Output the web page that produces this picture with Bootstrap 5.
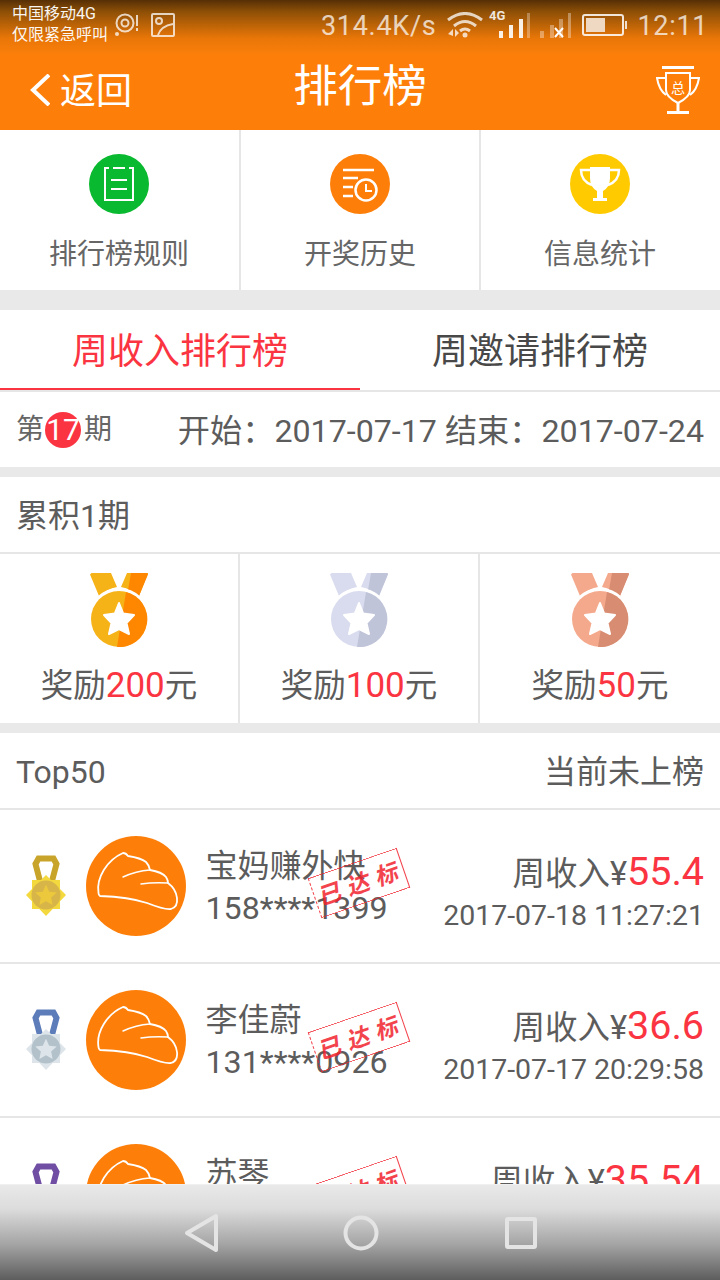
<!DOCTYPE html>
<html lang="zh-CN">

<head>
    <meta charset="UTF-8">
    <meta name="viewport" content="width=device-width, initial-scale=1.0">
    <title>排行榜</title>
    <link href="https://cdn.jsdelivr.net/npm/bootstrap@5.3.0/dist/css/bootstrap.min.css" rel="stylesheet">
    <style>
        body { margin: 0; background: #fff; font-family: Roboto, "Noto Sans CJK SC", sans-serif; color: #5c5c5c; }
        .phone { width: 720px; height: 1280px; overflow: hidden; position: relative; background: #fff; }

        .top-head { height: 130px; background: linear-gradient(#562f06 0, #8f5006 12px, #e87608 38px, #fd7f0a 56px); color: #fff; }
        .status-row { height: 50px; }
        .carrier { width: 103px; margin-left: 12px; margin-top: 3px; font-size: 16px; line-height: 21px; white-space: nowrap; opacity: .95; }
        .status-num { font-size: 27px; letter-spacing: .7px; opacity: .72; line-height: 52px; }
        .speed-num { margin-left: 146px; }
        .clock-num { margin-left: 9px; }
        .eye-ico { margin-top: 13px; }
        .pic-ico { margin: 13px 0 0 12px; }
        .wifi-ico { margin: 12px 0 0 11px; }
        .sig-ico { margin: 8px 0 0 6px; }
        .sig2-ico { margin: 12px 0 0 9px; }
        .batt-ico { margin: 13px 0 0 10px; }
        .title-row { height: 80px; padding: 0 20px 0 30px; }
        .back-link { width: 190px; font-size: 36px; gap: 10px; line-height: 1; }
        .back-link span { margin-top: 4px; }
        .page-title { font-size: 44.5px; line-height: 1; font-weight: 400; margin: 0 0 5px; }
        .side-box { width: 200px; }

        .gap-big { height: 20px; background: #e9e9e9; }
        .gap-small { height: 10px; background: #e9e9e9; }
        .line-b { border-bottom: 2px solid #e6e6e6; }
        .line-r { border-right: 2px solid #e6e6e6; }

        .entry-cell { height: 160px; padding-top: 24px; font-size: 28px; line-height: 1; color: #666; }
        .entry-a { width: 241px; padding-right: 1px; }
        .entry-b { width: 240px; }
        .entry-c { width: 239px; padding-right: 1px; }
        .round-ico { width: 60px; height: 60px; display: block; margin: 0 auto 27px; }

        .tab-bar { height: 82px; border-bottom: 2px solid #e6e6e6; font-size: 36px; }
        .tab-cell { width: 360px; height: 80px; line-height: 84px; text-align: center; color: #484848; }
        .tab-cell.active { color: #fb3441; border-bottom: 2px solid #fb3441; }

        .period-bar { height: 75px; padding: 0 16px; font-size: 32.2px; }
        .period-num { font-size: 28px; color: #666; }
        .period-num span { margin: 0 3px 0 1px; }
        .period-dot { width: 36px; height: 36px; border-radius: 50%; background: #fb3441; color: #fff; font-size: 30px; line-height: 36px; text-align: center; }
        .period-range { margin-top: 4px; }

        .info-bar { height: 77px; padding: 2px 16px 0; font-size: 32px; line-height: 1; }
        .prize-cell { height: 169px; padding-top: 19px; font-size: 32.5px; line-height: 1; color: #5c5c5c; }
        .prize-cell b { font-weight: 400; font-size: 35px; color: #fb3441; }
        .big-medal { width: 58px; height: 74px; display: block; margin: 0 auto 21px; }
        .m-gold { --m1: #f6b318; --m2: #ff8700; }
        .m-silver { --m1: #d9dcee; --m2: #c0c4d9; }
        .m-bronze { --m1: #f5a98c; --m2: #d88d72; }

        .rank-row { height: 154px; position: relative; border-bottom: 2px solid #e6e6e6; padding: 26px 16px 0 26px; }
        .rank-badge { width: 40px; height: 62px; margin: 19px 20px 0 0; flex-shrink: 0; }
        .rank-pic { width: 100px; height: 100px; flex-shrink: 0; margin-right: 19.5px; }
        .user-name { font-size: 32px; line-height: 41px; margin-top: 10px; }
        .user-phone { font-size: 32.2px; line-height: 42px; white-space: nowrap; }
        .sum-line { font-size: 32.5px; line-height: 43px; margin-top: 13.5px; white-space: nowrap; }
        .sum-line b { font-weight: 400; font-size: 39.5px; color: #fb3441; }
        .sum-time { font-size: 28.5px; line-height: 40px; white-space: nowrap; }
        .reach-stamp { position: absolute; left: 312px; top: 52px; width: 94px; height: 42px; border: 1.5px solid #f2242f; border-left-style: dashed; transform: rotate(-19deg); color: #f2242f; line-height: 38px; text-align: center; white-space: nowrap; opacity: .85; overflow: hidden; }
        .reach-stamp span { display: inline-block; font-family: "Noto Sans CJK SC", sans-serif; font-size: 23px; font-weight: 700; letter-spacing: 7px; margin-right: -7px; transform: skewX(-14deg); }

        .soft-keys { position: absolute; left: 0; right: 0; top: 1184px; height: 96px; background: linear-gradient(#e9e9e9 0, #dcdcdc 25%, #a5a5a5 62%, #5d5d5d 100%); border-top: 1px solid #f0f0f0; padding-bottom: 6px; }
        .key-back { left: 184px; top: 28px; }
        .key-home { left: 343px; top: 30px; }
        .key-task { left: 505px; top: 32px; }
    </style>
</head>

<body>
    <svg width="0" height="0" class="position-absolute">
        <defs>
            <symbol id="bigMedal" viewBox="0 0 58 74">
                <path d="M0 1.500 1.500 0H21L27 14Q17 16 9 23Z" fill="var(--m1)" />
                <path d="M37 0H58L49 23Q41 16 31 14Z" fill="var(--m1)" />
                <path d="M41 0H57.500L58 1.500 49 23Q44.500 19 38 17Z" fill="var(--m2)" />
                <circle cx="29" cy="46" r="31" fill="#fff" />
                <circle cx="29" cy="46" r="28" fill="var(--m1)" />
                <path d="M36 18.900A28 28 0 0 1 27 74Z" fill="var(--m2)" />
                <path d="M29 30 33.200 40.500 44 42 36.500 50 39 61 29 56 19 61 21.500 50 14 42 24.800 40.500Z" fill="#fff" stroke="#fff" stroke-width="2" stroke-linejoin="round" />
            </symbol>
            <symbol id="smallStar" viewBox="0 0 30 30">
                <path d="M15 4 18.400 11.400 26.500 12.300 20.500 17.800 22.100 25.800 15 21.800 7.900 25.800 9.500 17.800 3.500 12.300 11.600 11.400Z" />
            </symbol>
            <symbol id="avatarLogo" viewBox="0 0 100 100">
                <circle cx="50" cy="50" r="50" fill="#fd7f0a" />
                <path d="M12.500 57C10 42 21 24 37 17Q40 17 42 20 55 22 60 26 63 29 64 34 76 36 80 41 82 44 82 47 90 53 91 62 92 71 85 73 79 74 61 67 43 61 14 60 12.500 59 12.500 57Z" fill="none" stroke="#fff" stroke-width="1.800" stroke-linejoin="round" />
                <path d="M37 41Q50 35 64 34M55 48Q68 46 82 47" fill="none" stroke="#fff" stroke-width="1.500" stroke-linecap="round" />
            </symbol>
        </defs>
    </svg>

    <div class="phone">
        <div class="top-head">
            <div class="status-row d-flex">
                <div class="carrier">中国移动4G<br>仅限紧急呼叫</div>
                <svg width="24" height="24" viewBox="0 0 24 24" class="eye-ico opacity-75" fill="none" stroke="#fff">
                    <circle cx="10" cy="10" r="8.500" stroke-width="2" />
                    <circle cx="10" cy="10" r="3.500" stroke-width="2" />
                    <circle cx="2" cy="21" r="2" fill="#fff" stroke="none" />
                    <path d="M22 2v11M22 15v3" stroke-width="2" />
                </svg>
                <svg width="24" height="24" viewBox="0 0 24 24" class="pic-ico opacity-75" fill="none" stroke="#fff" stroke-width="2">
                    <rect x="1" y="1" width="22" height="22" rx="1" />
                    <circle cx="8" cy="8" r="3" />
                    <path d="M7 22Q10 13 22 11" />
                </svg>
                <div class="status-num speed-num">314.4K/s</div>
                <svg width="36" height="26" viewBox="0 0 36 26" class="wifi-ico opacity-75" fill="none" stroke="#fff" stroke-width="3">
                    <path d="M1 8Q18-5 35 8M7 14Q18 5 29 14M13 19Q18 15 23 19" />
                    <circle cx="18" cy="23" r="2.500" fill="#fff" stroke="none" />
                    <path d="M1 22 6 17V24ZM8 17 12 21 8 25Z" fill="#fff" stroke="none" />
                </svg>
                <svg width="42" height="30" viewBox="0 0 42 30" class="sig-ico" fill="#fff">
                    <text x="0" y="12" font-size="13" font-weight="700" font-family="Roboto, sans-serif" opacity=".85">4G</text>
                    <rect x="10" y="23" width="4" height="7" opacity=".9" />
                    <rect x="20" y="17" width="4" height="13" opacity=".9" />
                    <rect x="30" y="11" width="4" height="19" opacity=".9" />
                    <rect x="38" y="5" width="3" height="25" opacity=".3" />
                </svg>
                <svg width="32" height="26" viewBox="0 0 32 26" class="sig2-ico" fill="#fff">
                    <rect x="0" y="19" width="4" height="7" opacity=".35" />
                    <rect x="10" y="13" width="4" height="13" opacity=".35" />
                    <rect x="19" y="7" width="4" height="19" opacity=".35" />
                    <rect x="28" y="1" width="3" height="25" opacity=".35" />
                    <path d="M15 16 23 25M23 16 15 25" stroke="#fff" stroke-width="2" />
                </svg>
                <svg width="46" height="24" viewBox="0 0 46 24" class="batt-ico" fill="none" stroke="#fff" stroke-width="2">
                    <rect x="1" y="2" width="40" height="20" rx="2" opacity=".85" />
                    <rect x="4" y="5" width="19" height="14" fill="#f0d9c3" stroke="none" />
                    <rect x="43" y="8" width="2" height="8" fill="#fff" stroke="none" opacity=".8" />
                </svg>
                <div class="status-num clock-num">12:11</div>
            </div>
            <div class="title-row d-flex align-items-center justify-content-between">
                <div class="back-link d-flex align-items-center">
                    <svg width="20" height="32" viewBox="0 0 20 32" fill="none" stroke="#fff" stroke-width="4">
                        <path d="M19 1 3 16 19 31" />
                    </svg>
                    <span>返回</span>
                </div>
                <h1 class="page-title">排行榜</h1>
                <div class="side-box d-flex justify-content-end">
                    <svg width="44" height="48" viewBox="0 0 44 48" fill="none" stroke="#fff" stroke-width="2">
                        <path d="M6 1.500H38" stroke-width="3" />
                        <path d="M10 7H34V24Q34 31 22 37 10 31 10 24Z" />
                        <path d="M10 12H1Q3 24 10 29M34 12H43Q41 24 34 29" />
                        <path d="M22 37V45M11 46.500H33" stroke-width="3" />
                        <text x="22" y="27" font-size="14" fill="#fff" stroke="none" text-anchor="middle" font-family="Noto Sans CJK SC, sans-serif">总</text>
                    </svg>
                </div>
            </div>
        </div>

        <div class="d-flex">
            <div class="entry-a entry-cell line-r text-center">
                <svg class="round-ico" viewBox="0 0 60 60">
                    <circle cx="30" cy="30" r="30" fill="#09b92f" />
                    <path d="M20 14H16V46H44V14H40M24 14H36M22 26H38M22 35H38" fill="none" stroke="#fff" stroke-width="2" />
                </svg>
                排行榜规则
            </div>
            <div class="entry-b entry-cell line-r text-center">
                <svg class="round-ico" viewBox="0 0 60 60">
                    <circle cx="30" cy="30" r="30" fill="#fd7f0a" />
                    <path d="M13 16H44M13 24H28M13 33H23M13 42H23" fill="none" stroke="#fff" stroke-width="2.500" />
                    <circle cx="36" cy="36" r="10.500" fill="none" stroke="#fff" stroke-width="2.500" />
                    <path d="M36 30V37H42" fill="none" stroke="#fff" stroke-width="2" />
                </svg>
                开奖历史
            </div>
            <div class="entry-c entry-cell text-center">
                <svg class="round-ico" viewBox="0 0 60 60">
                    <circle cx="30" cy="30" r="30" fill="#ffcb00" />
                    <path d="M20 13H40V24Q40 33 33 37V44H37V47H23V44H27V37Q20 33 20 24Z" fill="#fff" />
                    <path d="M20 16H11Q11 27 22 31M40 16H49Q49 27 38 31" fill="none" stroke="#fff" stroke-width="2.500" />
                </svg>
                信息统计
            </div>
        </div>
        <div class="gap-big"></div>

        <div class="tab-bar d-flex">
            <div class="tab-cell active">周收入排行榜</div>
            <div class="tab-cell">周邀请排行榜</div>
        </div>

        <div class="period-bar d-flex align-items-center justify-content-between">
            <div class="period-num d-flex align-items-center">第<span class="period-dot">17</span>期</div>
            <div class="period-range">开始：2017-07-17 结束：2017-07-24</div>
        </div>
        <div class="gap-small"></div>

        <div class="info-bar line-b d-flex align-items-center">累积1期</div>
        <div class="row g-0">
            <div class="col-4 prize-cell line-r text-center m-gold">
                <svg class="big-medal"><use href="#bigMedal" /></svg>
                奖励<b>200</b>元
            </div>
            <div class="col-4 prize-cell line-r text-center m-silver">
                <svg class="big-medal"><use href="#bigMedal" /></svg>
                奖励<b>100</b>元
            </div>
            <div class="col-4 prize-cell text-center m-bronze">
                <svg class="big-medal"><use href="#bigMedal" /></svg>
                奖励<b>50</b>元
            </div>
        </div>
        <div class="gap-small"></div>

        <div class="info-bar line-b d-flex align-items-center justify-content-between">
            <span>Top50</span>
            <span>当前未上榜</span>
        </div>

        <div class="rank-row d-flex">
            <svg class="rank-badge" viewBox="0 0 40 62">
                <path d="M14 26 9.500 9 12.500 3.500H27.500L30.500 9 26 26" fill="none" stroke="#c9a42b" stroke-width="6" />
                <path d="M6 25H34V54H6Z M20 20 40 40 20 61 0 40Z" fill="#f3d83e" />
                <circle cx="20" cy="40" r="14.500" fill="#d8b548" />
                <use href="#smallStar" x="6" y="26" width="28" height="28" fill="#ecc93c" />
            </svg>
            <svg class="rank-pic"><use href="#avatarLogo" /></svg>
            <div class="flex-grow-1">
                <div class="user-name">宝妈赚外快</div>
                <div class="user-phone">158****1399</div>
            </div>
            <div class="text-end">
                <div class="sum-line">周收入¥<b>55.4</b></div>
                <div class="sum-time">2017-07-18 11:27:21</div>
            </div>
            <div class="reach-stamp"><span>已达标</span></div>
        </div>

        <div class="rank-row d-flex">
            <svg class="rank-badge" viewBox="0 0 40 62">
                <path d="M14 26 9.500 9 12.500 3.500H27.500L30.500 9 26 26" fill="none" stroke="#5c7cba" stroke-width="6" />
                <path d="M6 25H34V54H6Z M20 20 40 40 20 61 0 40Z" fill="#dde5ea" />
                <circle cx="20" cy="40" r="14.500" fill="#b3c1cb" />
                <use href="#smallStar" x="6" y="26" width="28" height="28" fill="#dde5ea" />
            </svg>
            <svg class="rank-pic"><use href="#avatarLogo" /></svg>
            <div class="flex-grow-1">
                <div class="user-name">李佳蔚</div>
                <div class="user-phone">131****0926</div>
            </div>
            <div class="text-end">
                <div class="sum-line">周收入¥<b>36.6</b></div>
                <div class="sum-time">2017-07-17 20:29:58</div>
            </div>
            <div class="reach-stamp"><span>已达标</span></div>
        </div>

        <div class="rank-row d-flex">
            <svg class="rank-badge" viewBox="0 0 40 62">
                <path d="M14 26 9.500 9 12.500 3.500H27.500L30.500 9 26 26" fill="none" stroke="#6f4ea3" stroke-width="6" />
            </svg>
            <svg class="rank-pic"><use href="#avatarLogo" /></svg>
            <div class="flex-grow-1">
                <div class="user-name">苏琴</div>
            </div>
            <div class="text-end">
                <div class="sum-line">周收入¥<b>35.54</b></div>
            </div>
            <div class="reach-stamp"><span>已达标</span></div>
        </div>

        <div class="soft-keys">
            <svg width="36" height="40" viewBox="0 0 36 40" class="key-back position-absolute" fill="none" stroke="#e4e4e4" stroke-width="4" stroke-linejoin="round">
                <path d="M32 3V37L3 20Z" />
            </svg>
            <svg width="36" height="36" viewBox="0 0 36 36" class="key-home position-absolute" fill="none" stroke="#e4e4e4" stroke-width="4">
                <circle cx="18" cy="18" r="15.500" />
            </svg>
            <svg width="32" height="32" viewBox="0 0 32 32" class="key-task position-absolute" fill="none" stroke="#e4e4e4" stroke-width="4">
                <rect x="2" y="2" width="28" height="28" rx="1" />
            </svg>
        </div>
    </div>
    <script src="https://cdn.jsdelivr.net/npm/bootstrap@5.3.0/dist/js/bootstrap.bundle.min.js"></script>
</body>

</html>
